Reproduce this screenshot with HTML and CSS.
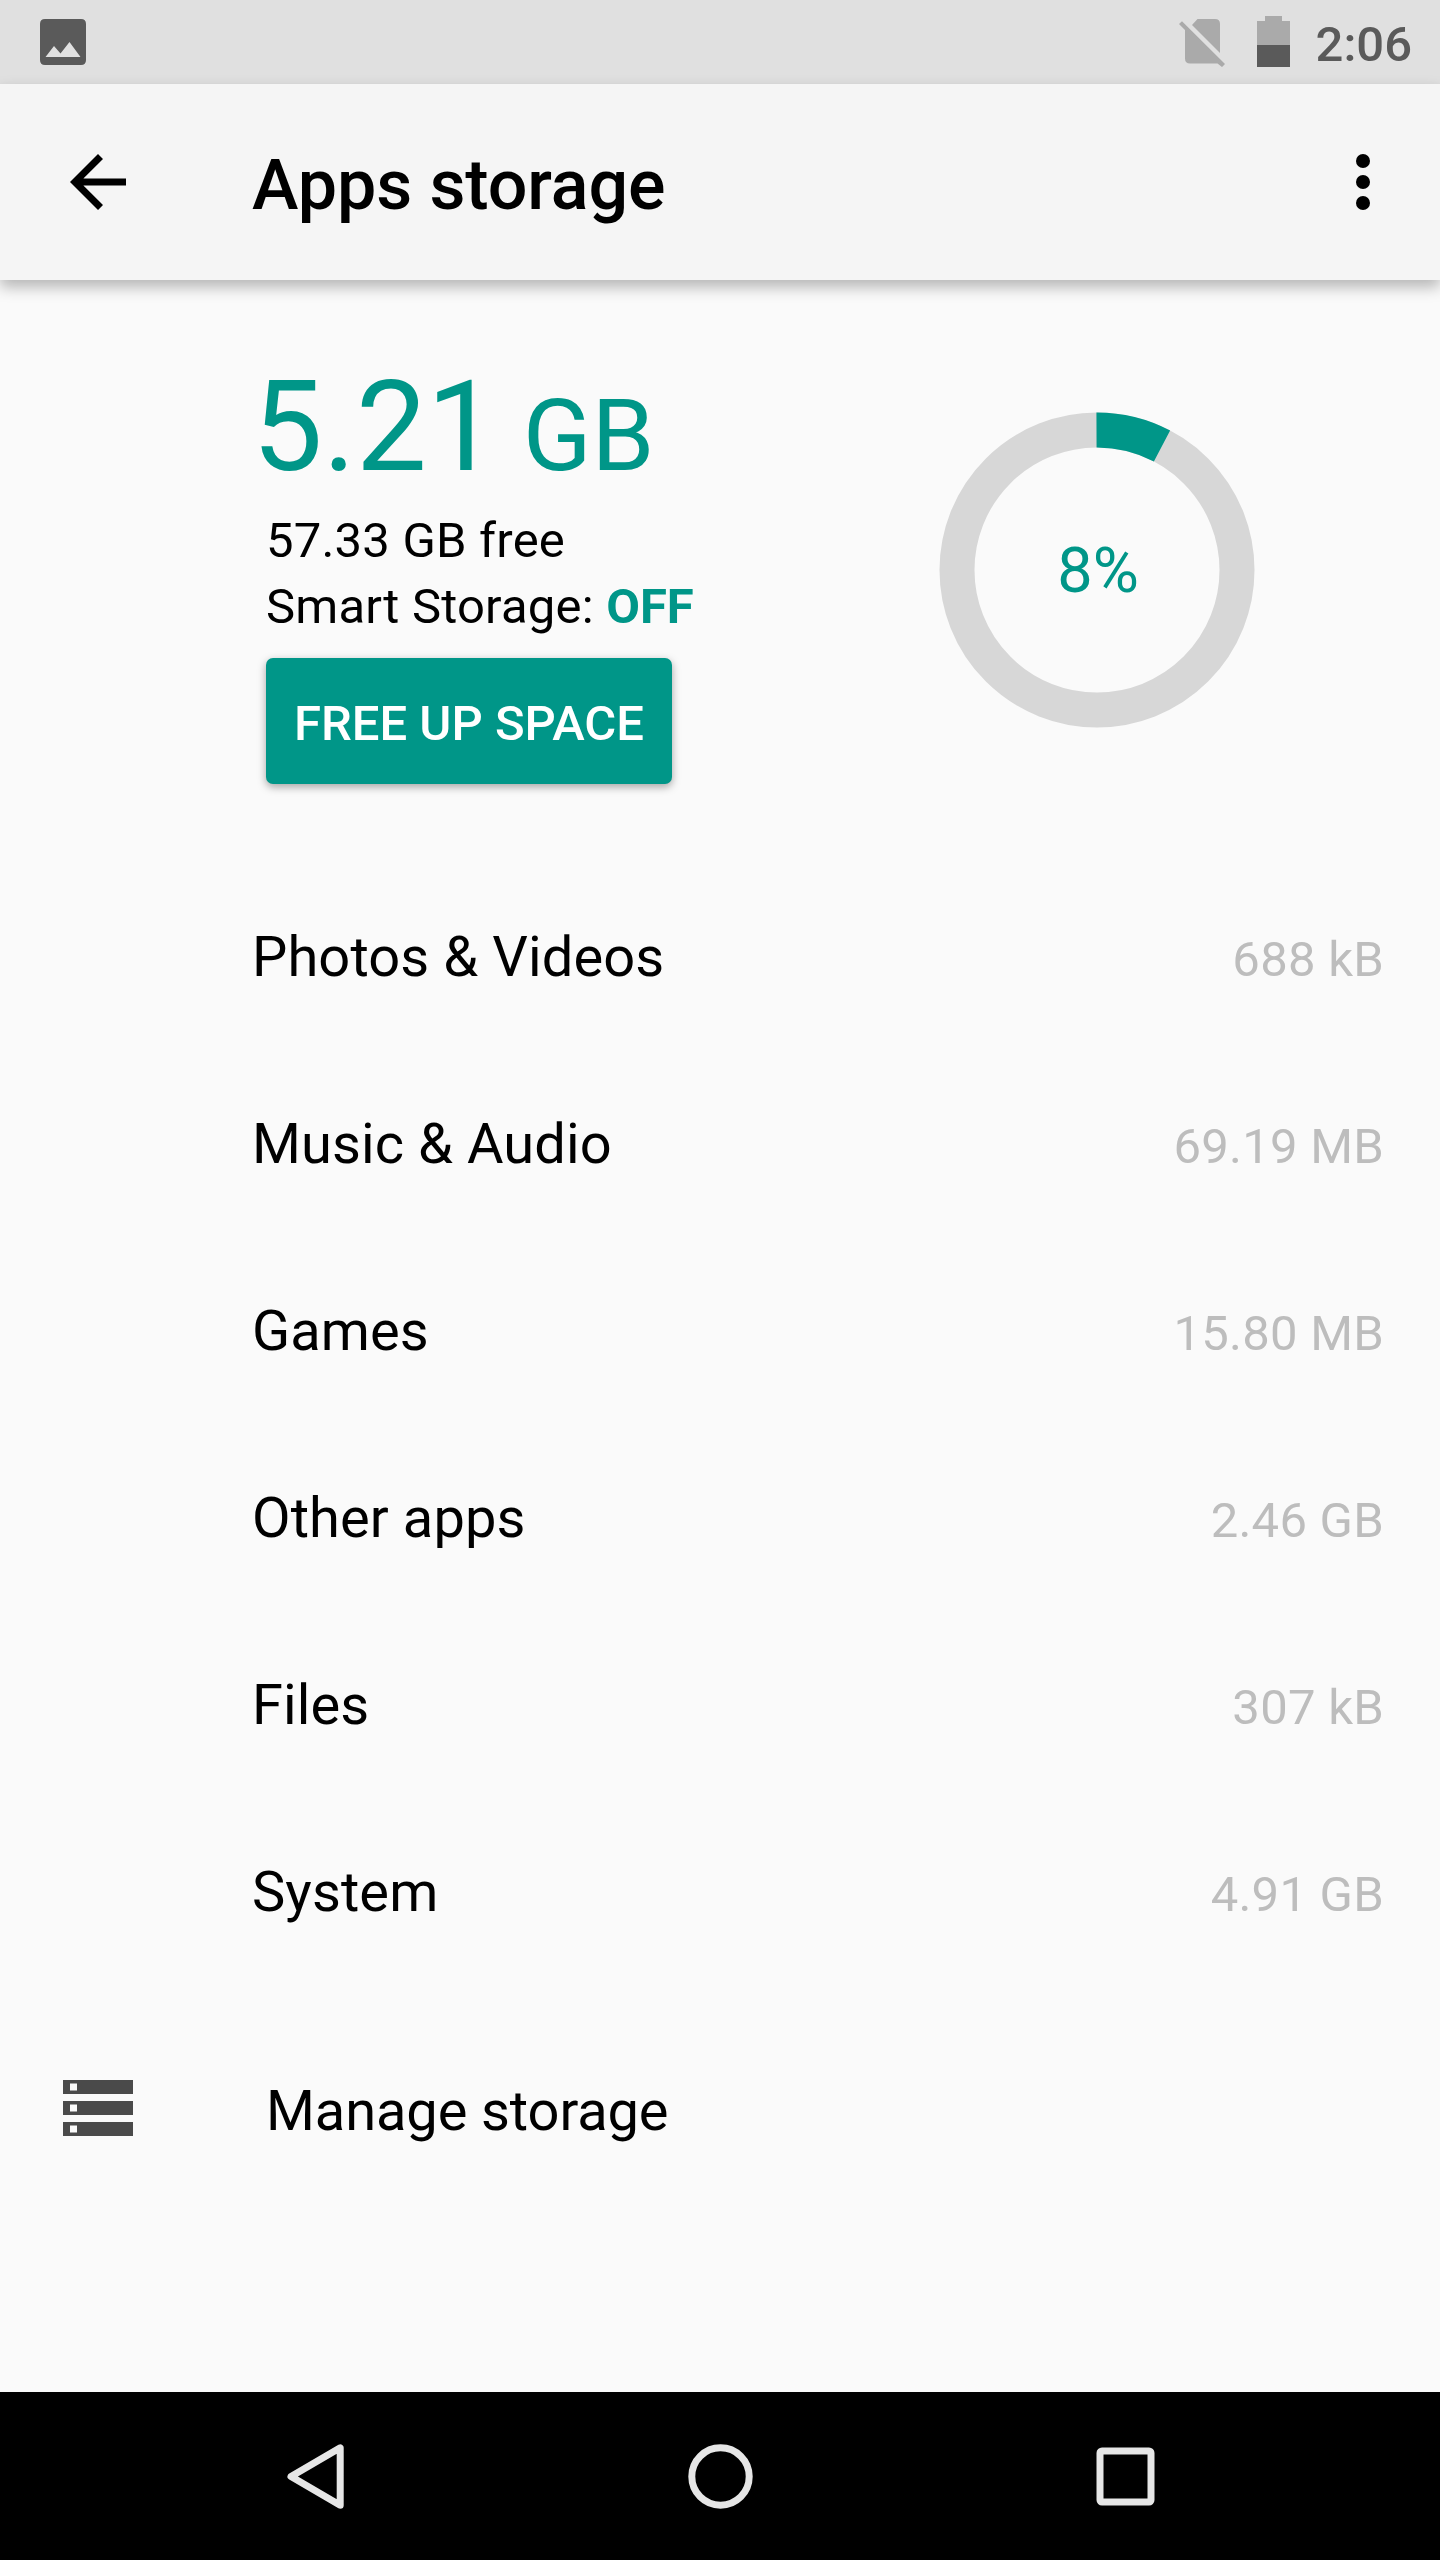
FILE: index.html
```
<!DOCTYPE html>
<html lang="en">
<head>
  <meta charset="UTF-8" />
  <meta name="viewport" content="width=device-width, initial-scale=1.0"/>
  <title>Apps storage</title>
  <link rel="stylesheet" href="styles.css">
</head>
<body>
  <div class="status-bar">
    <svg class="icon-picture" width="46" height="46" viewBox="0 0 46 46">
      <path fill="#5a5a5a" fill-rule="evenodd" d="M5 0H41Q46 0 46 5V41Q46 46 41 46H5Q0 46 0 41V5Q0 0 5 0ZM5.500 38H40.500L29.500 23L20.500 34.500L14 27Z"/>
    </svg>
    <div class="status-right">
      <svg class="icon-sim" width="46" height="46" viewBox="0 0 46 46">
        <path fill="#aaa" d="M13 6L18.500 0H36Q41 0 41 5V34ZM0 5L3 2.300L46 45L43 48L38.500 44.500H11Q6 44.500 6 39.500V11Z"/>
      </svg>
      <svg class="icon-battery" width="33" height="51" viewBox="0 0 33 51">
        <path fill="#aaa" d="M8 0H25V5H33V29H0V5H8Z"/>
        <path fill="#5a5a5a" d="M0 29H33V51H0Z"/>
      </svg>
      <span class="clock">2:06</span>
    </div>
  </div>

  <header class="app-bar">
    <svg class="icon-back" width="56" height="56" viewBox="0 0 56 56">
      <path d="M56 24.500H13.400L33 4.900L28 0L0 28L28 56L33 51.100L13.400 31.500H56Z"/>
    </svg>
    <h1>Apps storage</h1>
    <svg class="icon-more" width="14" height="56" viewBox="0 0 14 56">
      <circle cx="7" cy="7" r="7"/>
      <circle cx="7" cy="28" r="7"/>
      <circle cx="7" cy="49" r="7"/>
    </svg>
  </header>

  <main>
    <section class="summary">
      <div class="summary-text">
        <div class="used">5.21<span class="unit"> GB</span></div>
        <p>57.33 GB free</p>
        <p>Smart Storage: <b>OFF</b></p>
        <button>FREE UP SPACE</button>
      </div>
      <svg class="chart" width="316" height="316" viewBox="-158 -158 316 316">
        <circle r="140" fill="none" stroke="#d7d7d7" stroke-width="35"/>
        <path d="M-0.500 -140A140 140 0 0 1 65 -124" fill="none" stroke="#009688" stroke-width="35"/>
        <text x="1" y="22" text-anchor="middle">8%</text>
      </svg>
    </section>

    <ul class="categories">
      <li><span>Photos &amp; Videos</span><span class="size">688 kB</span></li>
      <li><span>Music &amp; Audio</span><span class="size">69.19 MB</span></li>
      <li><span>Games</span><span class="size">15.80 MB</span></li>
      <li><span>Other apps</span><span class="size">2.46 GB</span></li>
      <li><span>Files</span><span class="size">307 kB</span></li>
      <li><span>System</span><span class="size">4.91 GB</span></li>
    </ul>

    <div class="manage">
      <svg width="70" height="56" viewBox="0 0 70 56">
        <path fill="#4a4a4a" fill-rule="evenodd" d="M0 0H70V14H0ZM7 3.500V10.500H14V3.500ZM0 21H70V35H0ZM7 24.500V31.500H14V24.500ZM0 42H70V56H0ZM7 45.500V52.500H14V45.500Z"/>
      </svg>
      <span>Manage storage</span>
    </div>
  </main>

  <nav class="nav-bar">
    <svg width="66" height="66" viewBox="0 0 66 66">
      <path d="M58.200 4.800V62.200L9 33.500Z"/>
    </svg>
    <svg width="66" height="66" viewBox="0 0 66 66">
      <circle cx="33.500" cy="33.500" r="28.700"/>
    </svg>
    <svg width="66" height="66" viewBox="0 0 66 66">
      <rect x="8" y="8" width="51" height="51" rx="2"/>
    </svg>
  </nav>
</body>
</html>
```
FILE: styles.css
```
* {
  box-sizing: border-box;
  margin: 0;
  padding: 0;
}

body {
  display: flex;
  flex-direction: column;
  height: 2560px;
  background-color: #fafafa;
  color: #000;
  font-family: Roboto, sans-serif;
  overflow: hidden;
}

svg {
  display: block;
  flex-shrink: 0;
  overflow: visible;
}

/* Status bar */
.status-bar {
  display: flex;
  justify-content: space-between;
  height: 84px;
  padding: 0 28px 0 40px;
  background-color: #e0e0e0;
}

.icon-picture {
  margin-top: 19px;
}

.status-right {
  display: flex;
}

.icon-sim {
  margin: 19px 32px 0 0;
}

.icon-battery {
  margin: 16px 26px 0 0;
}

.clock {
  line-height: 89px;
  font-size: 49px;
  font-weight: 500;
  color: #5a5a5a;
}

/* App bar */
.app-bar {
  display: flex;
  align-items: center;
  height: 196px;
  padding: 0 70px;
  background-color: #f5f5f5;
  box-shadow: 0 7px 14px rgba(0, 0, 0, 0.28);
}

.app-bar h1 {
  flex: 1;
  margin-left: 126px;
  padding-top: 6px;
  font-size: 70px;
  font-weight: 500;
  letter-spacing: -0.1px;
}

/* Storage summary */
.summary {
  display: flex;
  height: 584px;
  padding: 84px 0 0 252px;
}

.summary-text {
  width: 687px;
}

.used {
  height: 144px;
  line-height: 126px;
  font-size: 126px;
  color: #009688;
}

.unit {
  font-size: 101px;
}

.summary-text p {
  margin-left: 14px;
  line-height: 66px;
  font-size: 49px;
  letter-spacing: 0.2px;
}

.summary-text b {
  font-weight: 700;
  letter-spacing: 0;
  color: #009688;
}

.summary-text button {
  width: 406px;
  height: 126px;
  margin: 18px 0 0 14px;
  padding-top: 4px;
  border: none;
  border-radius: 7px;
  background-color: #009688;
  box-shadow: 0 3px 8px rgba(0, 0, 0, 0.35);
  color: #fff;
  font-family: inherit;
  font-size: 49px;
  font-weight: 500;
}

.chart {
  margin-top: 48px;
}

.chart text {
  font-size: 63px;
  fill: #009688;
}

/* Category list */
.categories {
  list-style: none;
}

.categories li {
  display: flex;
  justify-content: space-between;
  align-items: baseline;
  height: 187px;
  padding: 0 56px 0 252px;
  line-height: 187px;
  font-size: 56px;
  letter-spacing: 0.1px;
}

.categories .size {
  font-size: 49px;
  letter-spacing: 0.25px;
  color: #bdbdbd;
}

.manage {
  display: flex;
  align-items: center;
  height: 196px;
  margin-top: 24px;
  padding-left: 63px;
  font-size: 56px;
}

.manage span {
  margin-left: 133px;
  padding-top: 5px;
  letter-spacing: -0.1px;
}

/* Navigation bar */
.nav-bar {
  display: flex;
  justify-content: space-between;
  align-items: center;
  height: 168px;
  margin-top: auto;
  padding: 0 282px;
  background-color: #000;
}

.nav-bar svg {
  fill: none;
  stroke: #e6e6e6;
  stroke-width: 7;
  stroke-linejoin: round;
}
```
